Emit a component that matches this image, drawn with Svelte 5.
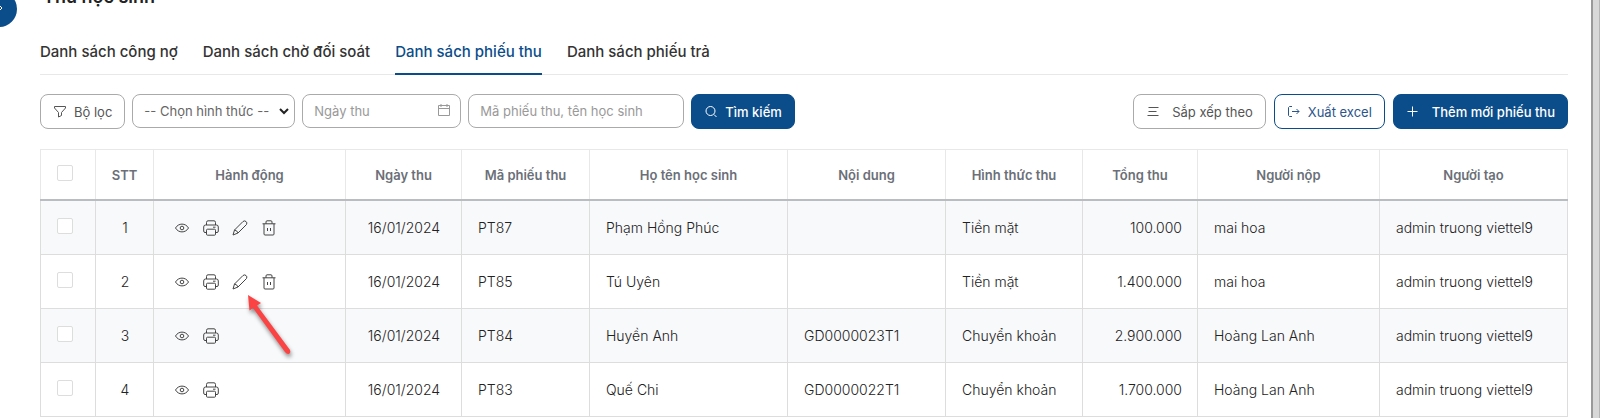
<script lang="ts">
  type Receipt = {
    date: string;
    code: string;
    student: string;
    content: string;
    method: string;
    total: string;
    payer: string;
    creator: string;
    editable: boolean;
  };

  const tabs = ["Danh sách công nợ", "Danh sách chờ đối soát", "Danh sách phiếu thu", "Danh sách phiếu trả"];
  let activeTab = $state(2);

  const columns = [
    { label: "STT", width: 58 },
    { label: "Hành động", width: 192 },
    { label: "Ngày thu", width: 116 },
    { label: "Mã phiếu thu", width: 128 },
    { label: "Họ tên học sinh", width: 198 },
    { label: "Nội dung", width: 158 },
    { label: "Hình thức thu", width: 137 },
    { label: "Tổng thu", width: 115 },
    { label: "Người nộp", width: 182 },
    { label: "Người tạo", width: 188 },
  ];
  const checkWidth = 55;
  const totalWidth = columns.reduce((sum, c) => sum + c.width, checkWidth);

  const receipts: Receipt[] = [
    { date: "16/01/2024", code: "PT87", student: "Phạm Hồng Phúc", content: "", method: "Tiền mặt", total: "100.000", payer: "mai hoa", creator: "admin truong viettel9", editable: true },
    { date: "16/01/2024", code: "PT85", student: "Tú Uyên", content: "", method: "Tiền mặt", total: "1.400.000", payer: "mai hoa", creator: "admin truong viettel9", editable: true },
    { date: "16/01/2024", code: "PT84", student: "Huyền Anh", content: "GD0000023T1", method: "Chuyển khoản", total: "2.900.000", payer: "Hoàng Lan Anh", creator: "admin truong viettel9", editable: false },
    { date: "16/01/2024", code: "PT83", student: "Quế Chi", content: "GD0000022T1", method: "Chuyển khoản", total: "1.700.000", payer: "Hoàng Lan Anh", creator: "admin truong viettel9", editable: false },
  ];
</script>

<div class="layout">
  <button class="collapse" aria-label="Thu gọn menu">
    <svg width="14" height="14" viewBox="0 0 14 14"><path d="M5 1l5 5-5 5" /></svg>
  </button>

  <main>
    <h1>Thu học sinh</h1>

    <nav class="tabs">
      {#each tabs as tab, i}
        <button class="tab" class:active={activeTab === i} onclick={() => (activeTab = i)}>{tab}</button>
      {/each}
    </nav>

    <div class="toolbar">
      <button class="btn">
        <svg width="14" height="14" viewBox="0 0 14 14"><path d="M1.500 1.500h11v1.500L8.500 7.500v3l-3 1.500V7.500l-4-4.500z" /></svg>
        Bộ lọc
      </button>
      <div class="field method">
        <select aria-label="Hình thức">
          <option>-- Chọn hình thức --</option>
          <option>Tiền mặt</option>
          <option>Chuyển khoản</option>
        </select>
        <svg class="chevron" width="10" height="8" viewBox="0 0 10 8"><path d="M1 2l4 4 4-4" /></svg>
      </div>
      <div class="field date">
        <input type="text" aria-label="Ngày thu" placeholder="Ngày thu" />
        <svg width="14" height="14" viewBox="0 0 14 14"><path d="M1.500 1.500h11v10h-11zM1.500 4.500h11M4 0v3M10 0v3" /></svg>
      </div>
      <div class="field keyword">
        <input type="text" aria-label="Mã phiếu thu, tên học sinh" placeholder="Mã phiếu thu, tên học sinh" />
      </div>
      <button class="btn primary">
        <svg width="14" height="14" viewBox="0 0 14 14"><circle cx="6.500" cy="6" r="4.500" /><path d="M10 9.500l2.500 2.500" /></svg>
        Tìm kiếm
      </button>
      <div class="actions">
        <button class="btn sort">
          <svg width="14" height="14" viewBox="0 0 14 14"><path d="M2.500 2.500h10M2.500 6.500h8M1.500 10.500h11" /></svg>
          Sắp xếp theo
        </button>
        <button class="btn outline">
          <svg width="14" height="14" viewBox="0 0 14 14"><path d="M5 1.500H2.500l-1 1v8l1 1H5M5 6.500h7M9.500 4l2.500 2.500L9.500 9" /></svg>
          Xuất excel
        </button>
        <button class="btn primary add">
          <svg width="14" height="14" viewBox="0 0 14 14"><path d="M6.500 1.500v10M1.500 6.500h10" /></svg>
          Thêm mới phiếu thu
        </button>
      </div>
    </div>

    <table>
      <colgroup>
        <col style:width="{(checkWidth / totalWidth) * 100}%" />
        {#each columns as column}
          <col style:width="{(column.width / totalWidth) * 100}%" />
        {/each}
      </colgroup>
      <thead>
        <tr>
          <th class="check"><input type="checkbox" aria-label="Chọn tất cả" /></th>
          {#each columns as column}
            <th>{column.label}</th>
          {/each}
        </tr>
      </thead>
      <tbody>
        {#each receipts as receipt, i}
          <tr>
            <td class="check"><input type="checkbox" aria-label="Chọn {receipt.code}" /></td>
            <td class="center">{i + 1}</td>
            <td>
              <div class="icons">
                <button aria-label="Xem">
                  <svg width="16" height="16" viewBox="0 0 16 16"><path d="M1.500 8C4.500 2.800 11.500 2.800 14.500 8C11.500 13.200 4.500 13.200 1.500 8z" /><circle cx="8" cy="8" r="1.800" /></svg>
                </button>
                <button aria-label="In">
                  <svg width="16" height="16" viewBox="0 0 16 16"><path d="M3.500 5V2.500Q3.500.8 5 .8h6q1.500 0 1.500 1.700V5M3.500 12.500H2Q.7 12.500.7 11V7Q.7 5 2.500 5h11Q15.300 5 15.300 7v4q0 1.500-1.300 1.500h-1.500M4.500 9.200h7q1 0 1 1v4q0 1-1 1h-7q-1 0-1-1v-4q0-1 1-1zM10 7.200h2.500" /></svg>
                </button>
                {#if receipt.editable}
                  <button aria-label="Sửa">
                    <svg width="16" height="16" viewBox="0 0 16 16"><path d="M1 15l1.500-5L11 1.500q1.500-1.200 3 0t.5 3L6 13zM2.500 10q2.500.3 3.500 3" /></svg>
                  </button>
                  <button aria-label="Xóa">
                    <svg width="16" height="16" viewBox="0 0 16 16"><path d="M1.500 3.800h13M3 3.800V14q0 1 1 1h8q1 0 1-1V3.800M5 3.800V2q0-1.200 1-1.200h4q1 0 1 1.200v1.800M6.500 8v3M9.500 8v3" /></svg>
                  </button>
                {/if}
              </div>
              {#if i === 1}
                <svg class="pointer" width="54" height="72" viewBox="0 0 54 72"><path d="M5 3L18 11L14 13.500L47 58Q48 61 45.500 62Q44 62.500 42 60L10 16L6.500 18.500z" /></svg>
              {/if}
            </td>
            <td class="center">{receipt.date}</td>
            <td>{receipt.code}</td>
            <td>{receipt.student}</td>
            <td>{receipt.content}</td>
            <td>{receipt.method}</td>
            <td class="right">{receipt.total}</td>
            <td>{receipt.payer}</td>
            <td>{receipt.creator}</td>
          </tr>
        {/each}
      </tbody>
    </table>
  </main>

  <div class="scroll-track"></div>
</div>

<style>
  :global(body) {
    background: #fff;
  }
  .layout {
    position: relative;
    display: flex;
    height: 100vh;
    overflow: hidden;
    font-family: Inter, "Liberation Sans", sans-serif;
    font-size: 13px;
    line-height: 20px;
    color: #333;
  }
  button,
  input,
  select {
    font: inherit;
    color: inherit;
  }
  button {
    padding: 0;
    border: 0;
    background: none;
    cursor: pointer;
  }
  svg {
    flex: none;
    fill: none;
    stroke: currentColor;
    stroke-width: 1;
  }
  .collapse {
    position: absolute;
    top: -9px;
    left: -19px;
    display: flex;
    align-items: center;
    justify-content: center;
    width: 36px;
    height: 36px;
    border-radius: 50%;
    background: #0b4d8a;
    color: #fff;
  }
  main {
    flex: 1;
    min-width: 0;
    margin-top: -15px;
    padding: 0 23px 0 40px;
  }
  h1 {
    margin: 0;
    padding: 0 3px;
    font-size: 18px;
    font-weight: 600;
    line-height: 24px;
    color: #222;
  }
  .tabs {
    display: flex;
    gap: 25px;
    margin-top: 31px;
    border-bottom: 1px solid #e8e8e8;
  }
  .tab {
    margin-bottom: -1px;
    padding: 0 0 9px;
    border-bottom: 2px solid transparent;
    font-size: 15px;
    font-weight: 500;
    line-height: 24px;
  }
  .tab.active {
    border-color: #0b4d8a;
    color: #0b4d8a;
  }
  .toolbar {
    display: flex;
    align-items: flex-start;
    gap: 7px;
    margin: 19px 0 20px;
  }
  .actions {
    display: flex;
    gap: 8px;
    margin-left: auto;
  }
  .btn {
    display: flex;
    align-items: center;
    gap: 7px;
    height: 35px;
    box-sizing: border-box;
    padding: 0 12px;
    border: 1px solid #aaa;
    border-radius: 8px;
    color: #555;
    white-space: nowrap;
  }
  .btn.outline {
    border-color: #0b4d8a;
    color: #2b558a;
  }
  .btn.primary {
    border-color: #0b4d8a;
    background: #0b4d8a;
    font-weight: 500;
    color: #fff;
  }
  .btn.sort,
  .btn.add {
    gap: 12px;
  }
  .field {
    display: flex;
    align-items: center;
    height: 34px;
    box-sizing: border-box;
    padding: 0 11px;
    border: 1px solid #aaa;
    border-radius: 8px;
    color: #666;
  }
  .field input,
  .field select {
    flex: 1;
    min-width: 0;
    padding: 0;
    border: 0;
    outline: 0;
    background: none;
    appearance: none;
  }
  .field input::placeholder {
    color: #999;
  }
  .method {
    width: 163px;
    padding-right: 5px;
  }
  .chevron {
    stroke: #222;
    stroke-width: 2;
  }
  .date {
    width: 159px;
    padding-right: 9px;
    color: #999;
  }
  .keyword {
    width: 216px;
  }
  table {
    width: 100%;
    table-layout: fixed;
    border-collapse: collapse;
  }
  th,
  td {
    padding: 0 15px 0 16px;
    border: 1px solid #ddd;
    text-align: left;
    white-space: nowrap;
  }
  th {
    height: 49px;
    padding: 0;
    border-color: #e8e8e8;
    border-bottom: 2px solid #b9bcc0;
    font-weight: 600;
    text-align: center;
    color: #6b6f78;
  }
  td {
    position: relative;
    height: 53px;
    font-size: 14px;
    font-weight: 300;
    color: #222;
  }
  tbody tr:nth-child(odd) {
    background: #f8f9fb;
  }
  .center {
    text-align: center;
  }
  .right {
    text-align: right;
  }
  .check {
    padding: 0 16px;
    text-align: left;
  }
  .check input {
    display: block;
    width: 16px;
    height: 16px;
    margin: 0 0 4px;
    border: 1px solid #ddd;
    border-radius: 2px;
    background: #fff;
    appearance: none;
  }
  .icons {
    display: flex;
    gap: 13px;
    padding-left: 4px;
    color: #444;
  }
  .icons button,
  .icons svg {
    display: block;
  }
  /* hint arrow over the edit action */
  .pointer {
    position: absolute;
    top: 37px;
    left: 89px;
    z-index: 1;
    fill: #fb4343;
    stroke: none;
    filter: drop-shadow(1px 3px 2px rgba(0, 0, 0, 0.45));
  }
  .scroll-track {
    width: 9px;
    box-sizing: border-box;
    border-left: 2px solid #999;
    border-right: 1px solid #b5b5b5;
    background: #d8d8d8;
  }
</style>
